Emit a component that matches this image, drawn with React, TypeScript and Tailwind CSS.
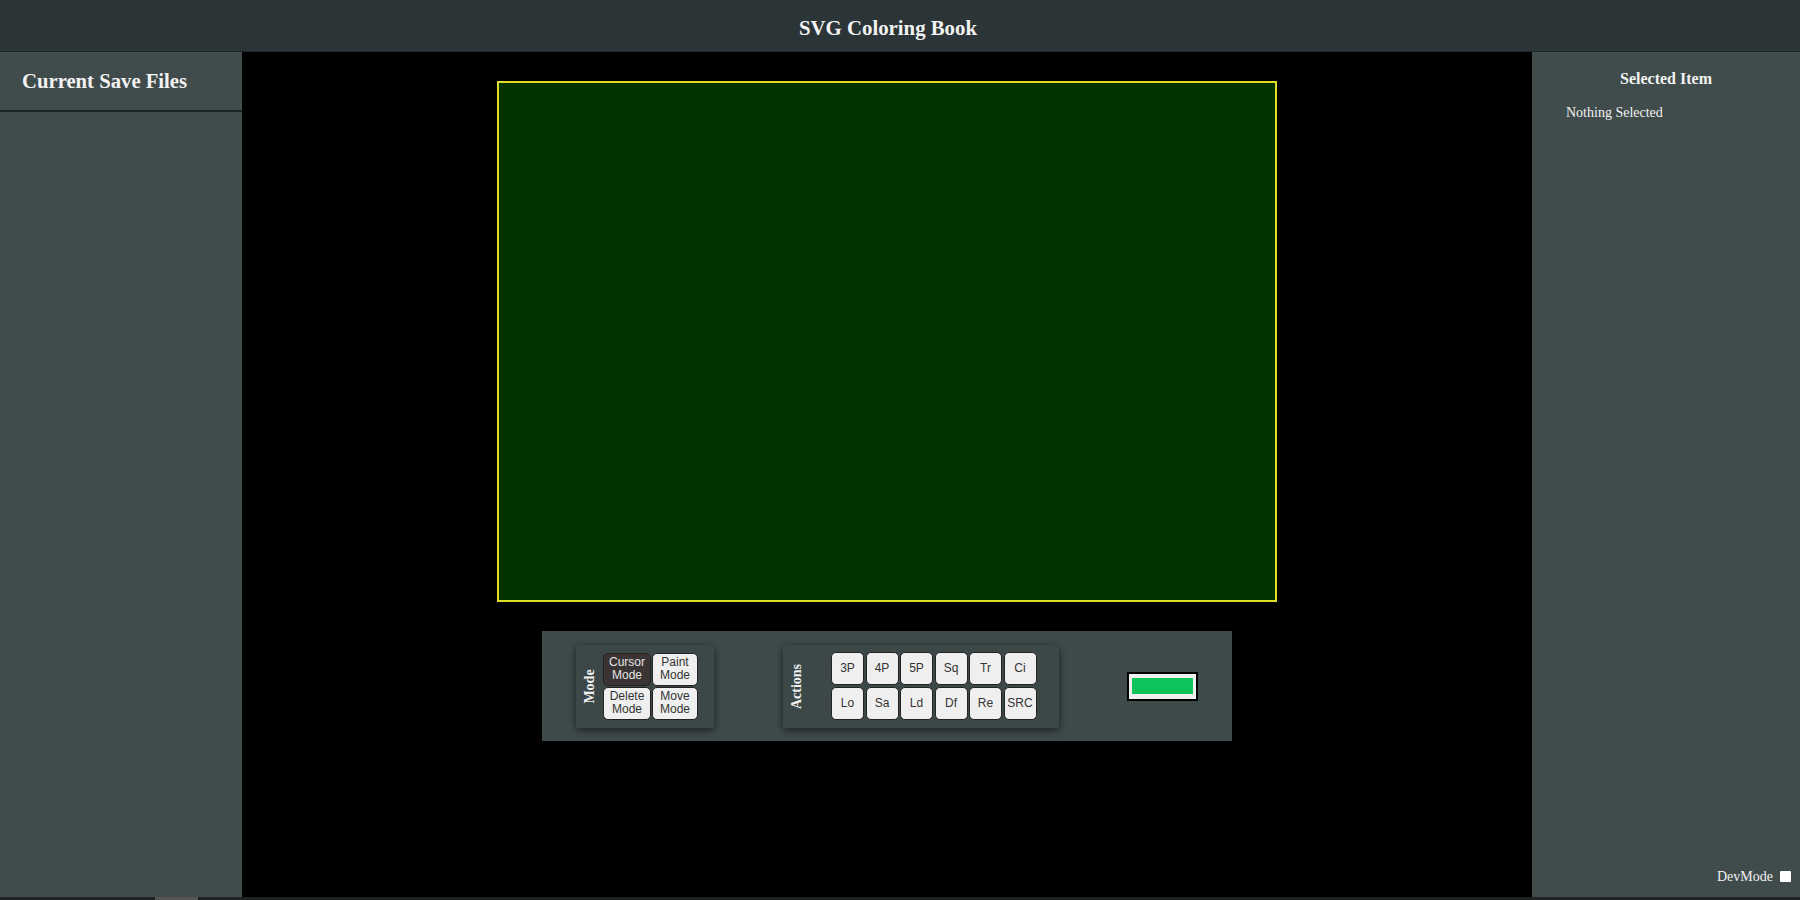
import React from "react";

const serif = "font-['Liberation_Serif','Times_New_Roman',serif]";
const sans = "font-['Liberation_Sans',Arial,sans-serif]";

function ToolButton({ label, active }: { label: string; active?: boolean }) {
  return (
    <button
      type="button"
      className={`flex h-[33px] items-center justify-center rounded-[5px] border border-[#222] px-0.5 text-[12px] leading-[13px] ${sans} ${
        active ? "bg-[#3a3434] text-[#e4e4e4]" : "bg-[#efefef] text-[#333]"
      }`}
    >
      {label}
    </button>
  );
}

function Group({ title, children, width }: { title: string; children: React.ReactNode; width: string }) {
  return (
    <div className={`flex h-[83px] ${width} items-center bg-[#3c4848] shadow-[0_2px_8px_rgba(0,0,0,0.6)]`}>
      <div className="flex w-[27px] shrink-0 items-center justify-center">
        <span className={`-rotate-90 whitespace-nowrap text-[14px] font-bold text-[#f0f0f0] ${serif}`}>{title}</span>
      </div>
      {children}
    </div>
  );
}

export default function App() {
  const actions = ["3P", "4P", "5P", "Sq", "Tr", "Ci", "Lo", "Sa", "Ld", "Df", "Re", "SRC"];

  return (
    <div className={`flex h-screen w-full flex-col overflow-hidden bg-black ${serif}`}>
      <header className="flex h-[52px] shrink-0 items-center justify-center border-b border-[#1e2526] bg-[#2b3537] pt-[5px] pr-[24px]">
        <h1 className="text-[20.8px] font-bold text-[#f2f2f2]">SVG Coloring Book</h1>
      </header>

      <div className="flex min-h-0 flex-1">
        <aside className="flex w-[242px] shrink-0 flex-col bg-[#404b4b]">
          <div className="flex h-[60px] items-center border-b-2 border-[#1e2526] pl-[22px] pt-[1px]">
            <h2 className="text-[20.7px] font-bold text-[#f2f2f2]">Current Save Files</h2>
          </div>
        </aside>

        <main className="flex flex-1 flex-col items-center pt-[29px]">
          <div className="h-[521px] w-[780px] border-2 border-[#dede2a] bg-[#003300]" />

          <div className="mt-[29px] flex h-[110px] w-[690px] items-center bg-[#3f4b4b] pl-[34px]">
            <Group title="Mode" width="w-[138px]">
              <div className="grid grid-cols-[48px_46px] gap-[1px]">
                <ToolButton label={"Cursor\nMode"} active />
                <ToolButton label={"Paint\nMode"} />
                <ToolButton label={"Delete\nMode"} />
                <ToolButton label={"Move\nMode"} />
              </div>
            </Group>

            <div className="ml-[69px]">
              <Group title="Actions" width="w-[276px]">
                <div className="ml-[21px] grid grid-cols-[repeat(6,33px)] gap-[1.5px]">
                  {actions.map((a) => (
                    <ToolButton key={a} label={a} />
                  ))}
                </div>
              </Group>
            </div>

            <div className="ml-[68px] flex h-[29px] w-[71px] items-center justify-center border-2 border-black bg-[#f0f0f0]">
              <div className="h-[16px] w-[61px] bg-[#0dc35a]" />
            </div>
          </div>
        </main>

        <aside className="relative flex w-[268px] shrink-0 flex-col bg-[#404b4b]">
          <h3 className="mt-[15px] text-center text-[16px] font-bold text-[#f2f2f2]">Selected Item</h3>
          <p className="mt-[11px] pl-[34px] text-[14px] text-[#f2f2f2]">Nothing Selected</p>
          <div className="mt-auto mb-[10px] flex items-center justify-end gap-[7px] pr-[9px]">
            <span className="text-[14px] text-[#f2f2f2]">DevMode</span>
            <span className="h-[11px] w-[11px] rounded-[1px] bg-white" />
          </div>
        </aside>
      </div>

      <div className="flex h-[3px] shrink-0 bg-[#1f2222]">
        <div className="ml-[155px] w-[43px] bg-[#555]" />
      </div>
    </div>
  );
}
